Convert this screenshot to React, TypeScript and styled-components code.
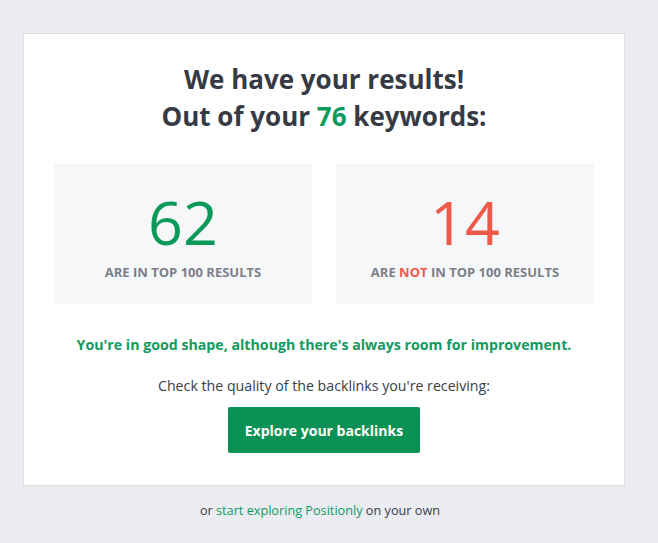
import React from "react";
import styled, { createGlobalStyle } from "styled-components";

const Global = createGlobalStyle`
  html, body {
    margin: 0;
    padding: 0;
    background: #ebecf1;
  }
  body {
    font-family: "Open Sans", "Noto Sans", "Liberation Sans", sans-serif;
    -webkit-font-smoothing: antialiased;
  }
`;

const Page = styled.div`
  width: 658px;
  min-height: 543px;
  box-sizing: border-box;
  padding: 33px 0 0 23px;
`;

const Column = styled.div`
  width: 602px;
  display: flex;
  flex-direction: column;
  align-items: stretch;
`;

const Card = styled.div`
  box-sizing: border-box;
  width: 602px;
  background: #ffffff;
  border: 1px solid #dcdee3;
  padding: 27px 30px 32px;
  display: flex;
  flex-direction: column;
  align-items: center;
`;

const Title = styled.h1`
  margin: 0;
  font-size: 26px;
  line-height: 37px;
  font-weight: 700;
  color: #363a44;
  text-align: center;
`;

const Green = styled.span`
  color: #0c9a5b;
`;

const Stats = styled.div`
  margin-top: 29px;
  width: 100%;
  display: grid;
  grid-template-columns: 1fr 1fr;
  gap: 24px;
`;

const StatBox = styled.div`
  height: 140px;
  box-sizing: border-box;
  padding-top: 26px;
  background: #f6f7f9;
  display: flex;
  flex-direction: column;
  align-items: center;
`;

const Number = styled.div<{ $tone: "good" | "bad" }>`
  font-size: 61px;
  line-height: 64px;
  font-weight: 400;
  color: ${(p) => (p.$tone === "good" ? "#0c9a5b" : "#f0584a")};
`;

const Label = styled.div`
  margin-top: 9px;
  font-size: 13px;
  line-height: 18px;
  font-weight: 700;
  color: #7c7f87;
  text-transform: uppercase;
`;

const Not = styled.span`
  color: #f0584a;
`;

const Verdict = styled.p`
  margin: 31px 0 0;
  font-size: 14.2px;
  line-height: 20px;
  font-weight: 700;
  color: #129a5e;
  text-align: center;
`;

const Prompt = styled.p`
  margin: 21px 0 0;
  font-size: 14.2px;
  line-height: 20px;
  font-weight: 400;
  color: #3a3d45;
  text-align: center;
`;

const Button = styled.button`
  margin-top: 11px;
  width: 192px;
  height: 46px;
  border: none;
  border-radius: 2px;
  background: #0b9155;
  color: #ffffff;
  font-family: inherit;
  font-size: 14px;
  font-weight: 700;
  cursor: pointer;
`;

const Footer = styled.p`
  margin: 15px 0 0;
  padding-right: 8px;
  font-size: 12.7px;
  line-height: 18px;
  color: #3a3d45;
  text-align: center;
`;

const Link = styled.a`
  color: #129a5e;
  text-decoration: none;
`;

export default function App() {
  return (
    <>
      <Global />
      <Page>
        <Column>
          <Card>
            <Title>
              We have your results!
              <br />
              Out of your <Green>76</Green> keywords:
            </Title>
            <Stats>
              <StatBox>
                <Number $tone="good">62</Number>
                <Label>Are in top 100 results</Label>
              </StatBox>
              <StatBox>
                <Number $tone="bad">14</Number>
                <Label>
                  Are <Not>not</Not> in top 100 results
                </Label>
              </StatBox>
            </Stats>
            <Verdict>
              You're in good shape, although there's always room for improvement.
            </Verdict>
            <Prompt>Check the quality of the backlinks you're receiving:</Prompt>
            <Button>Explore your backlinks</Button>
          </Card>
          <Footer>
            or <Link href="#">start exploring Positionly</Link> on your own
          </Footer>
        </Column>
      </Page>
    </>
  );
}
